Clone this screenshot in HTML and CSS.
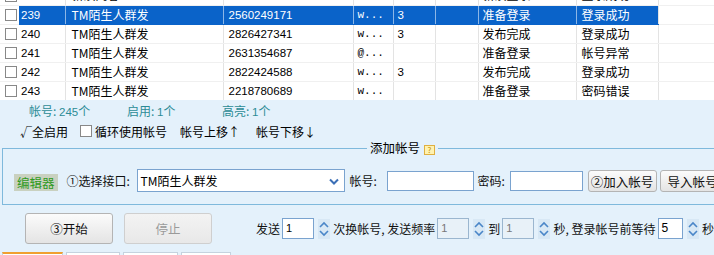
FILE: index.html
```html
<!DOCTYPE html>
<html lang="zh">
<head>
<meta charset="utf-8">
<title>帐号</title>
<link rel="stylesheet" href="styles.css">
</head>
<body>
<div class="app">
  <div class="grid">
    <table class="list">
      <colgroup>
        <col class="c-chk"><col class="c-id"><col class="c-name"><col class="c-phone"><col class="c-w"><col class="c-n"><col class="c-e"><col class="c-st"><col class="c-res"><col class="c-rest">
      </colgroup>
      <tbody>
        <tr><td class="chk"><span class="box"></span></td><td>238</td><td>新浪同客</td><td class="num">2813462270</td><td>w...</td><td></td><td></td><td>新浪登录</td><td>登录成功</td><td></td></tr>
        <tr class="sel"><td class="chk"><span class="box"></span></td><td class="num">239</td><td>TM陌生人群发</td><td class="num">2560249171</td><td class="mono">w...</td><td class="num">3</td><td></td><td>准备登录</td><td>登录成功</td><td></td></tr>
        <tr><td class="chk"><span class="box"></span></td><td class="num">240</td><td>TM陌生人群发</td><td class="num">2826427341</td><td class="mono">w...</td><td class="num">3</td><td></td><td>发布完成</td><td>登录成功</td><td></td></tr>
        <tr><td class="chk"><span class="box"></span></td><td class="num">241</td><td>TM陌生人群发</td><td class="num">2631354687</td><td class="mono">@...</td><td></td><td></td><td>准备登录</td><td>帐号异常</td><td></td></tr>
        <tr><td class="chk"><span class="box"></span></td><td class="num">242</td><td>TM陌生人群发</td><td class="num">2822424588</td><td class="mono">w...</td><td class="num">3</td><td></td><td>发布完成</td><td>登录成功</td><td></td></tr>
        <tr><td class="chk"><span class="box"></span></td><td class="num">243</td><td>TM陌生人群发</td><td class="num">2218780689</td><td class="mono">w...</td><td></td><td></td><td>准备登录</td><td>密码错误</td><td></td></tr>
      </tbody>
    </table>
  </div>

  <div class="stats">
    <span class="stat s1">帐号: <span class="num">245</span>个</span>
    <span class="stat s2">启用: <span class="num">1</span>个</span>
    <span class="stat s3">高亮: <span class="num">1</span>个</span>
  </div>

  <div class="tools">
    <span class="tool t1">√全启用</span>
    <label class="tool t2"><span class="box"></span>循环使用帐号</label>
    <span class="tool t3">帐号上移↑</span>
    <span class="tool t4">帐号下移↓</span>
  </div>

  <fieldset class="add">
    <legend>添加帐号 <span class="help">?</span></legend>
    <div class="add-row">
      <span class="tag">编辑器</span>
      <span class="lbl l-api">①选择接口:</span>
      <span class="select"><span class="sel-text">TM陌生人群发</span>
        <svg class="chev" width="10" height="7" viewBox="0 0 10 7"><path d="M1 1.5 L5 5.5 L9 1.5" fill="none" stroke="#3b6fb6" stroke-width="2"/></svg>
      </span>
      <span class="lbl l-acc">帐号:</span>
      <span class="input in-acc"></span>
      <span class="lbl l-pwd">密码:</span>
      <span class="input in-pwd"></span>
      <span class="btn b-add">②加入帐号</span>
      <span class="btn b-imp">导入帐号</span>
    </div>
  </fieldset>

  <div class="run">
    <span class="btn big b-start">③开始</span>
    <span class="btn big b-stop">停止</span>
    <span class="txt r-send">发送</span>
    <span class="input small w1">1</span>
    <span class="spin"><svg width="12" height="18" viewBox="0 0 12 18"><path d="M2 7 L6 3 L10 7 M2 11 L6 15 L10 11" fill="none" stroke="#4a86c8" stroke-width="1.6"/></svg></span>
    <span class="txt">次换帐号, 发送频率</span>
    <span class="input small dis w2">1</span>
    <span class="spin"><svg width="12" height="18" viewBox="0 0 12 18"><path d="M2 7 L6 3 L10 7 M2 11 L6 15 L10 11" fill="none" stroke="#4a86c8" stroke-width="1.6"/></svg></span>
    <span class="txt">到</span>
    <span class="input small dis w2">1</span>
    <span class="spin"><svg width="12" height="18" viewBox="0 0 12 18"><path d="M2 7 L6 3 L10 7 M2 11 L6 15 L10 11" fill="none" stroke="#4a86c8" stroke-width="1.6"/></svg></span>
    <span class="txt">秒, 登录帐号前等待</span>
    <span class="input small w3">5</span>
    <span class="spin"><svg width="12" height="18" viewBox="0 0 12 18"><path d="M2 7 L6 3 L10 7 M2 11 L6 15 L10 11" fill="none" stroke="#4a86c8" stroke-width="1.6"/></svg></span>
    <span class="txt">秒</span>
  </div>

  <div class="tabs">
    <span class="tab active">帐号管理</span>
    <span class="tab t-b">发送设置</span>
    <span class="tab t-c">内容设置</span>
    <span class="tab t-d">运行日志</span>
  </div>
</div>
</body>
</html>
```

FILE: styles.css
```css
* { box-sizing: border-box; }
html, body { margin: 0; padding: 0; }
body {
  width: 714px;
  height: 255px;
  overflow: hidden;
  background: #e4f1fb;
  font-family: "Noto Sans CJK SC", "Liberation Sans", sans-serif;
  font-size: 12px;
  color: #000;
}
.app { width: 714px; height: 255px; overflow: hidden; }

/* grid */
.grid {
  height: 100px;
  overflow: hidden;
  background: #fff;
}
.list {
  margin-top: -14px;
  border-collapse: collapse;
  table-layout: fixed;
  width: 714px;
}
.c-chk { width: 19px; }
.c-id { width: 46px; }
.c-name { width: 158px; }
.c-phone { width: 130px; }
.c-w { width: 40px; }
.c-n { width: 42px; }
.c-e { width: 43px; }
.c-st { width: 98px; }
.c-res { width: 82px; }
.c-rest { width: 56px; }
.list td {
  height: 19px;
  padding: 0 0 0 5px;
  border-bottom: 1px solid #f0f0f0;
  border-left: 1px solid #e3e3e3;
  white-space: nowrap;
  overflow: hidden;
  line-height: 18px;
}
.list td.chk { border-left: none; padding: 0 0 0 5px; }
.list td.chk + td { border-left: none; padding-left: 2px; }
.list td:nth-child(3) { padding-left: 6px; }
.list td:nth-child(4) { padding-left: 5px; }
.list td:nth-child(5), .list td:nth-child(6) { padding-left: 4px; }
.list td:nth-child(8) { padding-left: 4px; }
.num { font-family: "Liberation Sans", sans-serif; font-size: 11.5px; }
.mono { font-family: "Liberation Mono", monospace; font-size: 11px; letter-spacing: 0px; }
.box {
  display: inline-block;
  width: 12px;
  height: 12px;
  border: 1px solid #888;
  background: #fff;
  vertical-align: middle;
}
.list td.chk .box { display: block; margin-top: 1px; }
.list tr.sel td:not(.chk):not(:last-child) {
  background: #0a63c9;
  color: #fff;
  border-left-color: #8cb6e6;
  border-bottom-color: #0a63c9;
}
.list tr.sel td:last-child { border-left-color: #e3e3e3; }

/* stats */
.stats {
  height: 21px;
  display: flex;
  align-items: center;
  padding-left: 29px;
  color: #2c8c96;
}
.stat { display: inline-block; }
.s1 { width: 98px; }
.s2 { width: 95px; }

/* tools */
.tools {
  height: 20px;
  display: flex;
  align-items: center;
  padding-left: 20px;
}
.tool { display: inline-flex; align-items: center; }
.t1 { width: 60px; }
.t2 { width: 100px; }
.t2 .box { margin-right: 3px; width: 12px; height: 12px; }
.t3 { width: 76px; }

/* add fieldset */
.add {
  margin: 0 0 0 2px;
  width: 780px;
  padding: 0;
  border: 1px solid #7fb9dc;
  min-width: 0;
}
.add legend {
  margin-left: 364px;
  padding: 0 3px;
  line-height: 14px;
  font-size: 12.5px;
}
.help {
  display: inline-block;
  width: 11px;
  height: 10px;
  border: 1px solid #e0b040;
  background: #fff2b0;
  color: #c08a00;
  font-size: 8px;
  line-height: 8px;
  text-align: center;
  vertical-align: middle;
  margin-left: 1px;
}
.add-row {
  height: 49px;
  display: flex;
  align-items: center;
  padding-left: 11px;
  padding-top: 2px;
}
.tag {
  background: #c9d1c0;
  color: #2f9a22;
  height: 17px;
  line-height: 17px;
  padding: 0 3px;
  margin-top: 4px;
  font-size: 12.5px;
}
.lbl { color: #111; }
.l-api { margin-left: 9px; width: 70px; }
.select {
  width: 208px;
  height: 23px;
  border: 1px solid #7aa3cf;
  background: #fff;
  display: flex;
  align-items: center;
  justify-content: space-between;
  padding: 0 5px 0 3px;
}
.chev { margin-top: 1px; }
.l-acc { margin-left: 5px; width: 37px; }
.input {
  display: inline-block;
  height: 20px;
  border: 1px solid #7aa3cf;
  background: #fff;
}
.in-acc { width: 87px; margin-top: 1px; }
.l-pwd { margin-left: 4px; width: 32px; }
.in-pwd { width: 73px; margin-top: 1px; }
.btn {
  display: inline-flex;
  align-items: center;
  justify-content: center;
  border: 1px solid #b4b4b4;
  border-radius: 3px;
  background: linear-gradient(#fbfbfb, #e4e4e4);
  color: #111;
  height: 22px;
  flex-shrink: 0;
}
.b-add { margin-left: 5px; width: 69px; margin-top: 1px; font-size: 12.5px; }
.b-imp { margin-left: 3px; width: 66px; margin-top: 1px; font-size: 12.5px; }

/* run row */
.run {
  height: 45px;
  display: flex;
  align-items: center;
  padding-left: 25px;
  padding-top: 2px;
  white-space: nowrap;
}
.btn.big { height: 31px; width: 88px; font-size: 12.5px; }
.b-stop { margin-left: 11px; color: #9a9a9a; border-color: #cfcfcf; background: linear-gradient(#f3f3f3, #e8e8e8); }
.r-send { margin-left: 44px; }
.input.small {
  height: 21px;
  font-family: "Liberation Sans", sans-serif;
  font-size: 11px;
  line-height: 19px;
  padding-left: 3px;
  margin-left: 2px;
}
.input.dis { background: #e8f1f8; color: #777; border-color: #9bb6cf; }
.w1 { width: 33px; }
.w2 { width: 33px; }
.w3 { width: 26px; font-size: 12px !important; }
.spin {
  display: inline-flex;
  align-items: center;
  justify-content: center;
  width: 13px;
  height: 20px;
  background: #d8e8f5;
  margin: 0 3px 0 4px;
}
.txt { color: #111; }

/* tabs */
.tabs {
  height: 11px;
  display: flex;
  align-items: flex-start;
  padding-top: 2px;
  padding-left: 2px;
  gap: 3px;
}
.tab {
  display: inline-block;
  height: 20px;
  border: 1px solid #c5d3df;
  border-bottom: none;
  background: #fff;
  width: 54px;
  font-size: 12px;
  text-align: center;
  line-height: 16px;
  padding-top: 3px;
  color: #333;
}
.tab.active { width: 61px; border-top: 2px solid #f0a030; }
.t-c { width: 55px; }
.t-d { width: 50px; }
```
